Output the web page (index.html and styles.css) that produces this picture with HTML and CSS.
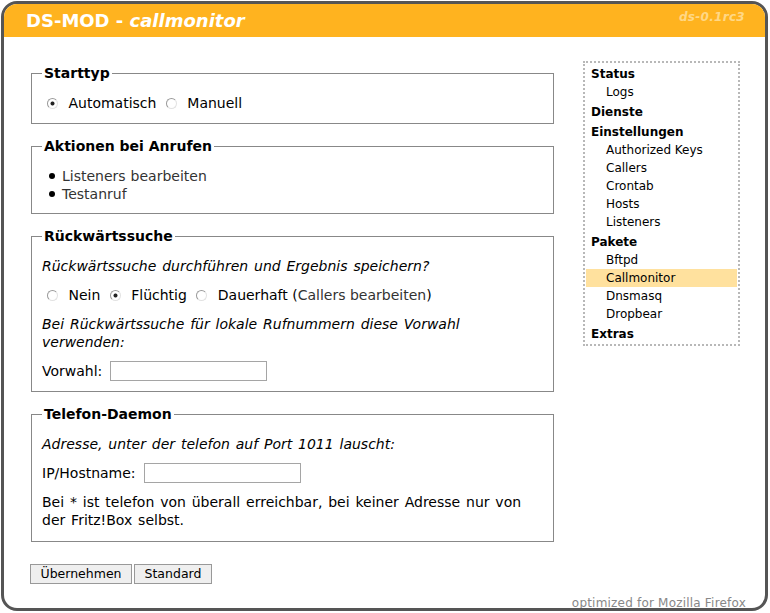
FILE: index.html
```html
<!DOCTYPE html>
<html lang="de">
<head>
<meta charset="utf-8">
<title>DS-MOD - callmonitor</title>
<link rel="stylesheet" href="styles.css">
</head>
<body>
<div class="page">
  <header class="header">
    <h1 class="title">DS-MOD - <em>callmonitor</em></h1>
    <span class="version">ds-0.1rc3</span>
  </header>
  <div class="main">
    <form class="content">
      <fieldset class="box">
        <legend>Starttyp</legend>
        <p class="row"><label><input type="radio" name="start" checked> Automatisch</label> <label><input type="radio" name="start"> Manuell</label></p>
      </fieldset>
      <fieldset class="box">
        <legend>Aktionen bei Anrufen</legend>
        <ul class="list">
          <li><a href="#">Listeners bearbeiten</a></li>
          <li><a href="#">Testanruf</a></li>
        </ul>
      </fieldset>
      <fieldset class="box">
        <legend>Rückwärtssuche</legend>
        <p class="hint">Rückwärtssuche durchführen und Ergebnis speichern?</p>
        <p class="row tall"><label><input type="radio" name="rev"> Nein</label> <label><input type="radio" name="rev" checked> Flüchtig</label> <label><input type="radio" name="rev"> Dauerhaft</label> (<a href="#">Callers bearbeiten</a>)</p>
        <p class="hint">Bei Rückwärtssuche für lokale Rufnummern diese Vorwahl verwenden:</p>
        <p class="field-row"><label for="vorwahl">Vorwahl:</label><input id="vorwahl" class="field" type="text"></p>
      </fieldset>
      <fieldset class="box">
        <legend>Telefon-Daemon</legend>
        <p class="hint">Adresse, unter der telefon auf Port 1011 lauscht:</p>
        <p class="field-row"><label for="host">IP/Hostname:</label><input id="host" class="field" type="text"></p>
        <p class="last">Bei * ist telefon von überall erreichbar, bei keiner Adresse nur von der Fritz!Box selbst.</p>
      </fieldset>
      <div class="actions">
        <button class="btn" type="button">Übernehmen</button>
        <button class="btn" type="button">Standard</button>
      </div>
    </form>
    <nav class="menu">
      <div class="menu-head first">Status</div>
      <div class="menu-item">Logs</div>
      <div class="menu-head">Dienste</div>
      <div class="menu-head">Einstellungen</div>
      <div class="menu-item">Authorized Keys</div>
      <div class="menu-item">Callers</div>
      <div class="menu-item">Crontab</div>
      <div class="menu-item">Hosts</div>
      <div class="menu-item">Listeners</div>
      <div class="menu-head">Pakete</div>
      <div class="menu-item">Bftpd</div>
      <div class="menu-item active">Callmonitor</div>
      <div class="menu-item">Dnsmasq</div>
      <div class="menu-item">Dropbear</div>
      <div class="menu-head">Extras</div>
    </nav>
  </div>
  <footer class="footer">optimized for Mozilla Firefox</footer>
</div>
</body>
</html>
```
FILE: styles.css
```css
html, body {
  margin: 0;
  padding: 0;
  background: #fff;
}

.page {
  margin: 1px 0 0 1px;
  width: 767px;
  height: 610px;
  box-sizing: border-box;
  border: 3px solid #555;
  border-radius: 16px;
  overflow: hidden;
  display: flex;
  flex-direction: column;
  background: #fff;
  font-family: "DejaVu Sans", sans-serif;
  font-size: 14px;
  color: #000;
}

.header {
  height: 33px;
  flex: none;
  background: #ffb31f;
  display: flex;
  justify-content: space-between;
  align-items: flex-start;
  padding: 0 20px 0 22px;
}

.title {
  margin: 0;
  font-size: 18px;
  line-height: 33px;
  font-weight: bold;
  color: #fff;
}

.title em {
  font-style: italic;
}

.version {
  margin-top: 6px;
  font-size: 12px;
  line-height: 14px;
  font-weight: bold;
  font-style: italic;
  letter-spacing: 0.3px;
  color: #ffd886;
}

.main {
  display: flex;
  align-items: flex-start;
  gap: 29px;
  padding: 24px 0 0 26px;
}

.content {
  width: 524px;
  margin: 0;
}

.box {
  margin: 3px 0 13px 1px;
  padding: 2px 10px 0;
  border: 1px solid #888;
  min-width: 0;
  word-spacing: 1.4px;
}

.box + .box {
  margin-top: 13px;
}

.box legend {
  font-weight: bold;
  font-size: 14px;
  line-height: 18px;
  padding: 0 2px;
  word-spacing: 0;
}

.box p {
  margin: 10px 0;
  line-height: 18px;
}

.box p.row {
  line-height: 19px;
  word-spacing: 0;
}

.box p.tall {
  line-height: 20px;
}

.box p.last {
  margin-bottom: 12px;
}

.hint {
  font-style: italic;
}

.row input[type="radio"] {
  appearance: none;
  -webkit-appearance: none;
  width: 11px;
  height: 11px;
  margin: 0 6px 0 5px;
  vertical-align: -1px;
  box-sizing: border-box;
  border-radius: 50%;
  border: 1px solid;
  border-color: #9a9a9a #e2e2e2 #e2e2e2 #9a9a9a;
  background: #fff;
}

.row input[type="radio"]:checked {
  background: radial-gradient(circle, #222 0, #222 1.6px, #fff 2.4px);
}

.list {
  margin: 10px 0;
  padding-left: 7px;
  line-height: 18px;
  list-style: none;
  word-spacing: 0.5px;
}

.list li::before {
  content: "";
  display: inline-block;
  width: 6px;
  height: 6px;
  border-radius: 50%;
  background: #000;
  margin-right: 7px;
  vertical-align: 2px;
}

a {
  color: #333;
  text-decoration: none;
}

.box p.field-row {
  display: flex;
  align-items: center;
  gap: 8px;
  height: 20px;
  line-height: 20px;
}

.field {
  width: 157px;
  height: 20px;
  box-sizing: border-box;
  margin: 0;
  padding: 0 2px;
  border: 1px solid #a5a5a5;
  font: inherit;
  background: #fff;
}

.actions {
  display: flex;
  gap: 2px;
  margin-top: 22px;
}

.btn {
  height: 20px;
  margin: 0;
  padding: 0 9.5px;
  border: 1px solid #999;
  background: #efefef;
  font-family: "DejaVu Sans", sans-serif;
  font-size: 12.5px;
  line-height: 18px;
  color: #000;
}

.menu {
  width: 157px;
  box-sizing: border-box;
  border: 2px dotted #b8b8b8;
  padding: 2px 1px 1px;
  font-size: 12px;
  line-height: 18px;
}

.menu-head {
  font-weight: bold;
  padding-left: 5px;
  margin-top: 2px;
}

.menu-head.first {
  margin-top: 0;
}

.menu-item {
  padding-left: 20px;
}

.menu-item.active {
  background: #ffe19e;
}

.footer {
  margin-top: auto;
  margin-bottom: -2px;
  text-align: right;
  padding-right: 19px;
  font-size: 12px;
  line-height: 14px;
  letter-spacing: 0.2px;
  color: #888;
}
```
